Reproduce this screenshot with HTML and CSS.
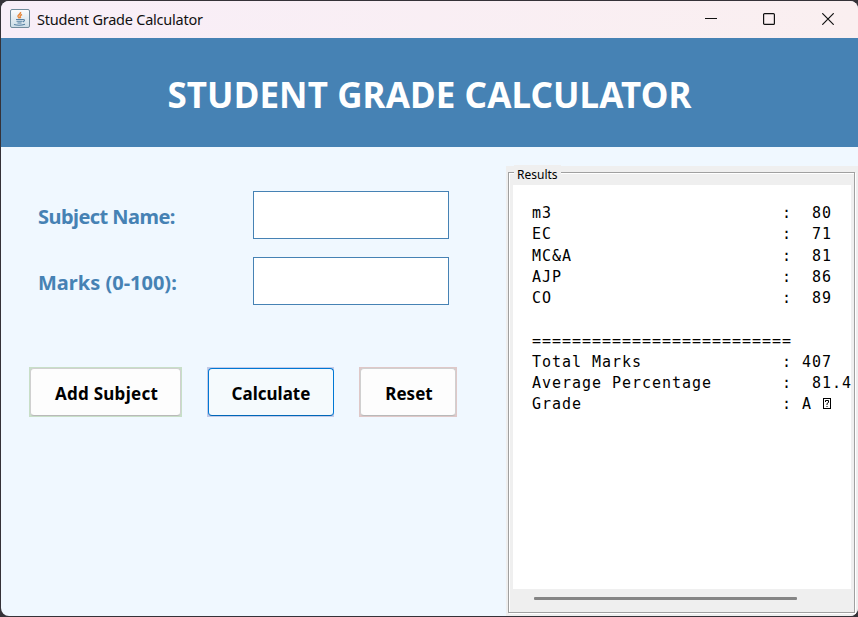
FILE: index.html
```html
<!DOCTYPE html>
<html lang="en">
<head>
<meta charset="utf-8">
<title>Student Grade Calculator</title>
<link rel="stylesheet" href="styles.css">
</head>
<body>
<div class="window">
  <header class="titlebar">
    <svg class="app-icon" width="20" height="19" viewBox="0 0 20 19">
      <defs><linearGradient id="tile" x1="0" y1="0" x2="0" y2="1"><stop offset="0" stop-color="#fcfdfd"/><stop offset="1" stop-color="#cbdce6"/></linearGradient></defs>
      <rect x=".5" y=".5" width="19" height="18" rx="1.5" fill="url(#tile)" stroke="#718b9c"/>
      <path d="M10.500 3C11.500 5 7.500 5.500 8 7.500Q8.500 8.500 9.500 9.300M12 5.500Q8.800 7 10.800 9" fill="none" stroke="#e8883b" stroke-width="1.500"/>
      <path d="M6 10.500H13M6.500 12.300H12.500M7.500 14H11.500M13 10.500Q16 10.500 13 13M4 15.500Q9.500 17 15 15.200" fill="none" stroke="#5681a3" stroke-width="1.100"/>
    </svg>
    <span class="window-title">Student Grade Calculator</span>
    <div class="controls">
      <svg width="12" height="12" viewBox="0 0 12 12"><path d="M0 5.500H12"/></svg>
      <svg width="12" height="12" viewBox="0 0 12 12"><rect x=".6" y=".6" width="10.800" height="10.800" rx="1"/></svg>
      <svg class="close" width="12" height="12" viewBox="0 0 12 12"><path d="M.3 .3L11.700 11.700M11.700 .3L.3 11.700"/></svg>
    </div>
  </header>
  <div class="banner"><h1>STUDENT GRADE CALCULATOR</h1></div>
  <main class="content">
    <section class="form">
      <div class="field"><label class="subject-label" for="subject">Subject Name:</label><input id="subject" type="text"></div>
      <div class="field"><label class="marks-label" for="marks">Marks (0-100):</label><input id="marks" type="text"></div>
      <div class="actions">
        <button class="add" type="button"><span>Add Subject</span></button>
        <button class="calculate" type="button"><span>Calculate</span></button>
        <button class="reset" type="button"><span>Reset</span></button>
      </div>
    </section>
    <section class="results">
      <div class="frame">
        <h2>Results</h2>
        <pre class="output">m3                       :  80
EC                       :  71
MC&amp;A                     :  81
AJP                      :  86
CO                       :  89

==========================
Total Marks              : 407
Average Percentage       :  81.4
Grade                    : A <svg class="missing" width="8" height="11" viewBox="0 0 8 11"><rect x=".5" y=".5" width="7" height="10"/><path d="M2.500 4V2.500H5.500V4.500L4 5.500V7M4 8V9"/></svg></pre>
        <div class="scrollbar"><div class="thumb"></div></div>
      </div>
    </section>
  </main>
</div>
</body>
</html>
```
FILE: styles.css
```css
* { box-sizing: border-box; }
body {
  margin: 0;
  height: 617px;
  padding: 1px 0 1px 1px;
  background: #353238;
  font-family: "Noto Sans", sans-serif;
  overflow: hidden;
}
.window {
  height: 615px;
  display: flex;
  flex-direction: column;
  border-radius: 8px;
  overflow: hidden;
  background: #f0f8ff;
}
.titlebar {
  height: 37px;
  display: flex;
  align-items: center;
  padding: 0 24px 2px 9px;
  background: linear-gradient(90deg, #f8eef8, #faeff0);
}
.window-title {
  margin-left: 7px;
  font-size: 14.5px;
  line-height: 20px;
  letter-spacing: -.23px;
  color: #111;
}
.controls { display: flex; gap: 46px; margin-left: auto; }
.controls svg { fill: none; stroke: #111; stroke-width: 1.200; }
.controls .close { margin-left: 1px; }
.banner {
  height: 109px;
  display: flex;
  align-items: center;
  justify-content: center;
  background: #4682b4;
}
h1 {
  margin: 4px 0 0;
  font-size: 35px;
  line-height: 48px;
  letter-spacing: .1px;
  color: #fff;
  white-space: nowrap;
}
.content { display: flex; flex: 1; }
.form { width: 505px; flex: none; padding: 44px 0 0 28px; }
.field {
  display: grid;
  grid-template-columns: 215px 196px;
  align-items: center;
  height: 48px;
  margin: 0 0 18px 9px;
}
label { padding-top: 2px; font-size: 20px; font-weight: 700; color: #4682b4; }
.subject-label { letter-spacing: -.55px; }
input {
  width: 196px;
  height: 48px;
  padding: 0 10px;
  border: 1px solid #4682b4;
  background: #fff;
}
.actions { display: flex; gap: 25px; margin-top: 62px; }
button {
  height: 50px;
  padding: 1px;
  border: 0;
  font: 700 17px "Noto Sans", sans-serif;
  color: #000;
}
button span {
  display: flex;
  height: 48px;
  align-items: center;
  justify-content: center;
  padding: 3px 0 0 2px;
  border: 1px solid #d0d0d0;
  border-bottom-color: #b9b9b9;
  border-radius: 4px;
  background: #fdfdfd;
}
.add { width: 153px; background: #c8dfc8; letter-spacing: .27px; }
.calculate { width: 127px; padding-right: 0; background: #c3cbe8; }
.calculate span { border-color: #0078d4; border-bottom-color: #0067b8; background: #f5fafd; padding-left: 0; }
.reset { width: 98px; background: #dfc8c8; }
.results { flex: 1; min-width: 0; background: #efefef; margin-top: 19px; padding: 6px 3px 3px 2px; }
.frame {
  height: 441px;
  display: flex;
  flex-direction: column;
  border: 1px solid #a0a0a0;
  box-shadow: inset 1px 1px #fff, 1px 1px #fff;
  padding: 0 3px 0 4px;
}
h2 {
  align-self: flex-start;
  margin: -8px 0 1px 1px;
  padding: 0 3px;
  background: #efefef;
  font-size: 12px;
  font-weight: 400;
  line-height: 19px;
  color: #000;
}
.output {
  margin: 0;
  height: 404px;
  padding: 18px 0 0 19px;
  overflow: hidden;
  background: #fff;
  font: 15px/21.25px "DejaVu Sans Mono", monospace;
  letter-spacing: .97px;
  color: #000;
}
.missing {
  margin-left: 1px;
  fill: none;
  stroke: #000;
  stroke-width: 1;
}
.scrollbar { padding: 8px 0 0 21px; }
.thumb { width: 263px; height: 3px; border-radius: 1px; background: #858585; }
```
